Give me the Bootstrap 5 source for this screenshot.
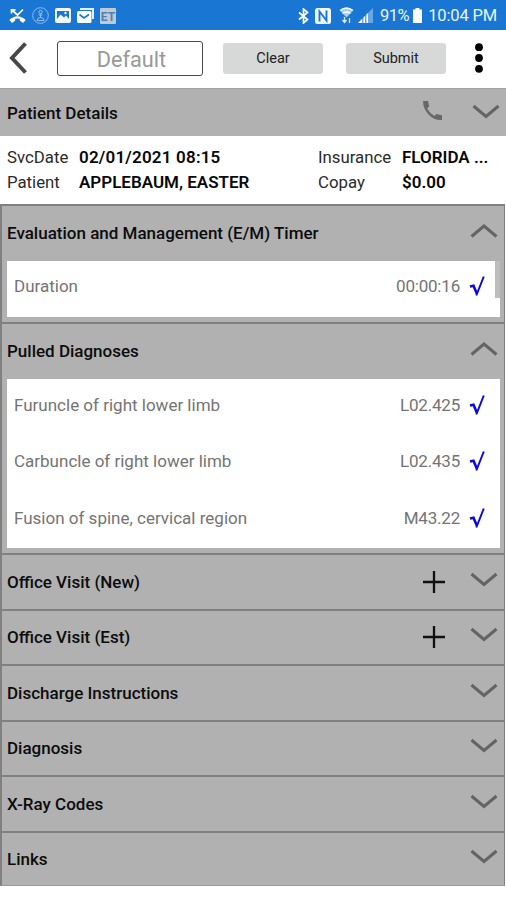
<!DOCTYPE html>
<html lang="en">
<head>
<meta charset="utf-8">
<meta name="viewport" content="width=device-width, initial-scale=1">
<title>Patient Details</title>
<link rel="stylesheet" href="https://cdn.jsdelivr.net/npm/bootstrap@5.3.0/dist/css/bootstrap.min.css">
<style>
body{font-family:Roboto,"Liberation Sans",sans-serif;background:#fff;color:#111;font-size:16px;line-height:24px;overflow:hidden}
svg{display:block;flex:none}
.statusbar{height:30px;background:#1976d3;color:#e8f4ff;padding:1px 9px 0 9px}
.s-left{gap:6px}
.pct{font-size:16.5px;margin-left:6px;letter-spacing:-.5px}
.clock{font-size:16.5px;margin-left:6px;letter-spacing:-.15px}
.nfc{margin-left:6px}
.wifi{margin-left:8px}
.signal,.batt{margin-left:4px}
.topbar{height:58px;padding:0 22px 2px 9px}
.f-default{width:146px;height:35px;border:1.5px solid #4a4a4a;border-radius:3px;color:#999;font-size:21.7px;margin-left:29px;padding:3px 0 0 3px;line-height:30px}
.btn-gray{--bs-btn-bg:#d7d9d8;--bs-btn-color:#222;--bs-btn-border-width:0;width:100px;height:31px;font-size:14.5px;padding:0;border-radius:3px;line-height:31px;margin-left:20px}
.btn-gray + .btn-gray{margin-left:23px}
.title-row{font-weight:500;color:#0c0c0c;font-size:17px}
.title-row span{padding-bottom:2px}
.title-row .arrow{margin-top:-5px}
.pd-bar{height:48px;background:#b1b1b1;padding:3px 6px 0 7px;border-top:1px solid #a3a3a3}
.phone{margin:-7px 29px 0 0}
.info{height:68px;padding:9px 0 0 7px;font-size:17px;line-height:24.5px;color:#2a2a2a}
.info b{font-weight:600;color:#080808}
.info .c1,.info .c3{font-weight:400;font-size:16.8px}
.c1{width:72px}.c2{width:239px}.c3{width:84px}
.date{letter-spacing:.2px}
.sect{background:#b1b1b1;border:solid #808080;border-width:2px 1px 0 2px;margin-right:1px;padding-left:5px}
.sect .title-row{height:55px;padding:0 6px 0 0}
.sect.shut{height:55.5px}
.sect.shut .title-row{height:53.5px}
.sect.shut .title-row span{padding-bottom:0}
.sect.shut .arrow{margin-top:-4px}
.sect.shut:last-child{border-bottom:1px solid #999}
.em{height:118px}.pulled{height:231px}
.panel{background:#fff;width:493px;color:#747474;font-size:17px}
.panel .item{height:56.3px;padding:0 15px 5px 7px}
.panel .code{letter-spacing:-.2px}
.em .panel{height:56px}
.em .item{padding-bottom:6px}
.pulled .item{padding-bottom:4px}
.em .bar-thumb{position:absolute;right:0;top:0;width:5px;height:37px;background:#bdbdbd}
.chk{margin-left:9px}
.plus{margin-right:25px}
</style>
</head>
<body>
<svg width="0" height="0" class="position-absolute">
  <symbol id="down" viewBox="0 0 28 16"><path d="M1.500 2 14 12.500 26.500 2" fill="none" stroke="#646464" stroke-width="3"/></symbol>
  <symbol id="up" viewBox="0 0 28 16"><path d="M1.500 13.500 14 3 26.500 13.500" fill="none" stroke="#646464" stroke-width="3"/></symbol>
  <symbol id="check" viewBox="0 0 16 22"><path d="M1 11.500 4.500 10.800 7.800 18.500" fill="none" stroke="#0909dc" stroke-width="2.600"/><path d="M7.300 20.500 14.800 1.500" fill="none" stroke="#0909dc" stroke-width="2"/></symbol>
  <symbol id="add" viewBox="0 0 22 22"><path d="M11 0V22M0 11H22" stroke="#101010" stroke-width="2.300"/></symbol>
</svg>

<div class="statusbar d-flex align-items-center justify-content-between">
  <div class="s-left d-flex align-items-center">
    <svg width="17" height="16" viewBox="0 0 17 16"><path d="M2.500 1.500 8.500 7 14 1.500M2.500 5.500V1.800H6.500" fill="none" stroke="#fff" stroke-width="1.700"/><path d="M.3 12Q8.500 4.500 16.700 12L14 15 10.800 12.600V10.800Q8.500 10 6.200 10.800V12.600L3 15Z" fill="#fff"/></svg>
    <svg width="17" height="17" viewBox="0 0 17 17" fill="none" stroke="#8dbdec"><circle cx="8.500" cy="8.500" r="7.800"/><circle cx="8.500" cy="5" r="1.700"/><path d="M8.500 6.500V11M6.500 8H10.500M5 13.500Q5 10.500 8.500 10.500T12 13.500Z"/></svg>
    <svg width="16" height="15" viewBox="0 0 16 15"><rect width="16" height="15" rx="2" fill="#f1f8ff"/><path d="M2 11V3H14V11L11 7.500 9 9.500 5.500 6.500Z" fill="#1976d3"/><circle cx="10.500" cy="5" r="1.200" fill="#fff"/></svg>
    <svg width="17" height="15" viewBox="0 0 17 15"><path d="M3 1H16V11" fill="none" stroke="#e1f0ff" stroke-width="2"/><rect y="3" width="14.500" height="12" rx="1.500" fill="#fff"/><path d="M2.500 6.500 7 10 12 6.500" fill="none" stroke="#1976d3" stroke-width="1.600"/></svg>
    <svg width="16" height="16" viewBox="0 0 16 16"><rect width="16" height="16" rx="1" fill="#c2c9d0"/><text x="8" y="12.500" text-anchor="middle" font-family="Roboto,sans-serif" font-size="12" font-weight="700" fill="#4c82b9">ET</text></svg>
  </div>
  <div class="d-flex align-items-center">
    <svg width="11" height="16" viewBox="0 0 11 16"><path d="M1 4.500 9.500 11.500 5.500 15V1L9.500 4.500 1 11.500" fill="none" stroke="#fff" stroke-width="1.700"/></svg>
    <svg class="nfc" width="16" height="16" viewBox="0 0 16 16"><rect width="16" height="16" rx="2.500" fill="#eff7ff"/><path d="M4.500 13.500V3.500L11.500 12.500V2.500" fill="none" stroke="#1976d3" stroke-width="1.900"/></svg>
    <svg class="wifi" width="15" height="17" viewBox="0 0 15 17"><path d="M1 3.500Q7.500-1.500 14 3.500L7.500 10.500Z" fill="#a6cff5"/><path d="M1 3.500Q7.500-1.500 14 3.500M3.500 6.500Q7.500 3.500 11.500 6.500" fill="none" stroke="#fff" stroke-width="1.400"/><path d="M5.500 10V15M3.500 13 5.500 15.500 7.500 13M10.500 16V11" fill="none" stroke="#d9ecff" stroke-width="1.300"/></svg>
    <svg class="signal" width="16" height="15" viewBox="0 0 16 15"><path d="M0 15 15 0V15Z" fill="#6ba7e4"/><path d="M0 15 4 11V15ZM5.500 15V9.500L7 8V15ZM8.500 15V6.500L10 5V15Z" fill="#fff"/></svg>
    <span class="pct">91%</span>
    <svg class="batt" width="9" height="15" viewBox="0 0 9 15"><path d="M0 1.500H2.500V0H6.500V1.500H9V15H0Z" fill="#fff"/></svg>
    <span class="clock">10:04 PM</span>
  </div>
</div>

<header class="topbar d-flex align-items-center">
  <svg width="19" height="32" viewBox="0 0 19 32"><path d="M16.500 1.500 3 16 16.500 30.500" fill="none" stroke="#484848" stroke-width="4"/></svg>
  <div class="f-default text-center">Default</div>
  <button class="btn btn-gray">Clear</button>
  <button class="btn btn-gray">Submit</button>
  <svg class="ms-auto" width="10" height="30" viewBox="0 0 10 30"><circle cx="5" cy="4.200" r="3.900"/><circle cx="5" cy="15" r="3.900"/><circle cx="5" cy="25.800" r="3.900"/></svg>
</header>

<div class="pd-bar title-row d-flex align-items-center">
  <span class="me-auto">Patient Details</span>
  <svg class="phone" width="21" height="21" viewBox="0 0 21 21"><path d="M1 1H6L7.200 6.500 5 8.500Q8 13.500 12.500 16L14.500 14 20 15.200V20Q12 20.500 6.500 14.500 1 8.500 1 1Z" fill="#686868"/></svg>
  <svg class="arrow" width="28" height="16"><use href="#down"/></svg>
</div>

<div class="info">
  <div class="d-flex"><span class="c1">SvcDate</span><b class="c2 date">02/01/2021 08:15</b><span class="c3">Insurance</span><b>FLORIDA ...</b></div>
  <div class="d-flex"><span class="c1">Patient</span><b class="c2">APPLEBAUM, EASTER</b><span class="c3">Copay</span><b>$0.00</b></div>
</div>

<main>
  <section class="sect em">
    <div class="title-row d-flex align-items-center"><span class="me-auto">Evaluation and Management (E/M) Timer</span><svg class="arrow" width="28" height="16"><use href="#up"/></svg></div>
    <div class="panel position-relative">
      <div class="item d-flex align-items-center"><span class="me-auto">Duration</span><span class="code">00:00:16</span><svg class="chk" width="16" height="22"><use href="#check"/></svg></div>
      <div class="bar-thumb"></div>
    </div>
  </section>
  <section class="sect pulled">
    <div class="title-row d-flex align-items-center"><span class="me-auto">Pulled Diagnoses</span><svg class="arrow" width="28" height="16"><use href="#up"/></svg></div>
    <div class="panel">
      <div class="item d-flex align-items-center"><span class="me-auto">Furuncle of right lower limb</span><span class="code">L02.425</span><svg class="chk" width="16" height="22"><use href="#check"/></svg></div>
      <div class="item d-flex align-items-center"><span class="me-auto">Carbuncle of right lower limb</span><span class="code">L02.435</span><svg class="chk" width="16" height="22"><use href="#check"/></svg></div>
      <div class="item d-flex align-items-center"><span class="me-auto">Fusion of spine, cervical region</span><span class="code">M43.22</span><svg class="chk" width="16" height="22"><use href="#check"/></svg></div>
    </div>
  </section>
  <section class="sect shut"><div class="title-row d-flex align-items-center"><span class="me-auto">Office Visit (New)</span><svg class="plus" width="22" height="22"><use href="#add"/></svg><svg class="arrow" width="28" height="16"><use href="#down"/></svg></div></section>
  <section class="sect shut"><div class="title-row d-flex align-items-center"><span class="me-auto">Office Visit (Est)</span><svg class="plus" width="22" height="22"><use href="#add"/></svg><svg class="arrow" width="28" height="16"><use href="#down"/></svg></div></section>
  <section class="sect shut"><div class="title-row d-flex align-items-center"><span class="me-auto">Discharge Instructions</span><svg class="arrow" width="28" height="16"><use href="#down"/></svg></div></section>
  <section class="sect shut"><div class="title-row d-flex align-items-center"><span class="me-auto">Diagnosis</span><svg class="arrow" width="28" height="16"><use href="#down"/></svg></div></section>
  <section class="sect shut"><div class="title-row d-flex align-items-center"><span class="me-auto">X-Ray Codes</span><svg class="arrow" width="28" height="16"><use href="#down"/></svg></div></section>
  <section class="sect shut"><div class="title-row d-flex align-items-center"><span class="me-auto">Links</span><svg class="arrow" width="28" height="16"><use href="#down"/></svg></div></section>
</main>
<script src="https://cdn.jsdelivr.net/npm/bootstrap@5.3.0/dist/js/bootstrap.bundle.min.js"></script>
</body>
</html>
